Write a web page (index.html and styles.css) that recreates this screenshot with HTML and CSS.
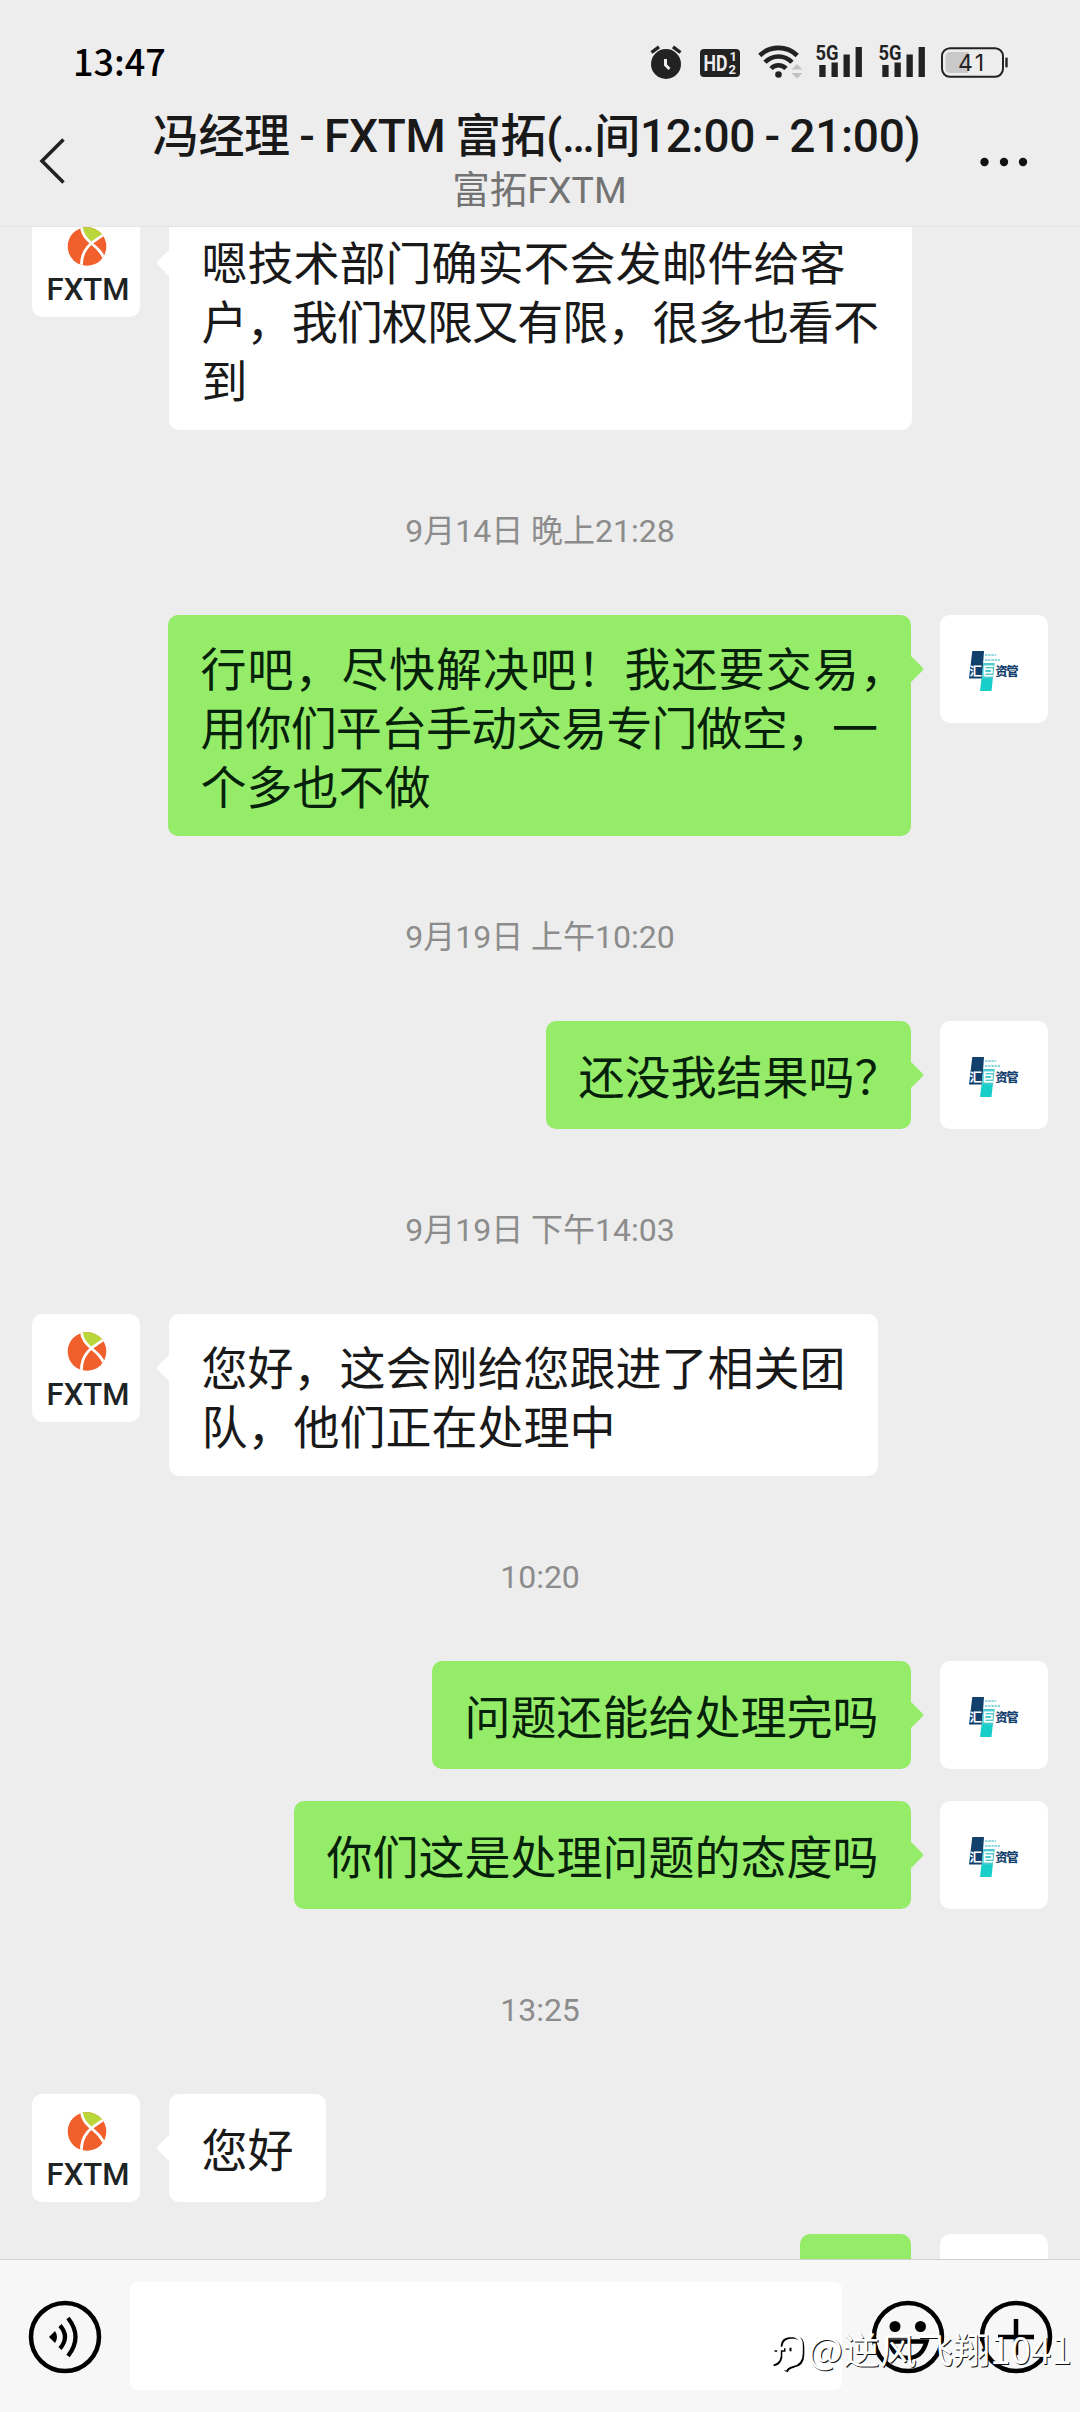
FILE: index.html
```html
<!DOCTYPE html>
<html lang="zh-CN">
<head>
<meta charset="utf-8">
<title>聊天</title>
<link rel="stylesheet" href="styles.css">
</head>
<body>
<svg class="defs" width="0" height="0" aria-hidden="true">
  <defs>
    <clipPath id="ball"><circle cx="55" cy="37.5" r="19.3"/></clipPath>
    <symbol id="fxtm" viewBox="0 0 108 108">
      <g clip-path="url(#ball)">
        <rect x="34" y="16" width="42" height="42" fill="#f15f2c"/>
        <path d="M49 14C50 26 54 31 59.500 36C63 32 68 28 76 24L66 14Z" fill="#b9d63a"/>
        <path d="M49 14C49.500 36 67 32 74 54M76 23C62 32 48 38 49.500 59" fill="none" stroke="#fff" stroke-width="2.800"/>
      </g>
      <text x="14.500" y="90.500" class="fxtm-word" textLength="83" lengthAdjust="spacingAndGlyphs">FXTM</text>
    </symbol>
    <symbol id="huiju" viewBox="0 0 108 108">
      <path d="M32.300 36H44L42 63.500H29Z" fill="#12406c"/>
      <path d="M43.500 48H54.500L51.500 76H40Z" fill="#17cfc8"/>
      <path d="M43.500 48H54.500L53 63.500H42Z" fill="#4cc9cd"/>
      <path d="M45 40H56M45 45H60" stroke="#8fd8dc" stroke-width="2.200" stroke-dasharray="2.400 .8"/>
      <text x="29.500" y="60.800" class="hj-white" textLength="25">汇巨</text>
      <text x="55.500" y="60.800" class="hj-navy" textLength="23">资管</text>
    </symbol>
  </defs>
</svg>
<div class="phone">
  <header class="top">
    <div class="status">
      <span class="clock">13:47</span>
      <div class="status-icons">
        <svg width="32" height="36" viewBox="650 44 32 36"><circle cx="666" cy="64" r="15" fill="#222"/><path d="M651.500 52.500L659 46.800M680.500 52.500L673 46.800" stroke="#222" stroke-width="3.400"/><path d="M665.500 59V65L669.500 69" fill="none" stroke="#ededed" stroke-width="3"/></svg>
        <svg class="gap-18" width="40" height="36" viewBox="700 44 40 36"><rect x="700" y="49" width="40" height="28" rx="4" fill="#222"/><text x="703.500" y="71" class="hd" textLength="24" lengthAdjust="spacingAndGlyphs">HD</text><text x="729.500" y="61" class="hd-n">1</text><text x="728.500" y="74" class="hd-n">2</text></svg>
        <svg class="gap-18" width="45" height="36" viewBox="758 44 45 36"><g fill="none" stroke="#222" stroke-width="4.600"><path d="M759.800 55.500A26.800 26.800 0 0 1 797.200 55.500"/><path d="M765 62.300A18.500 18.500 0 0 1 792 62.300"/><path d="M771 68.500A10.300 10.300 0 0 1 786 68.500"/></g><circle cx="778.500" cy="74.500" r="3.300" fill="#222"/><path d="M791.500 69.500L797 64L802.500 69.500ZM791.500 73L797 78.500L802.500 73Z" fill="#c2c2c2"/></svg>
        <svg class="gap-12" width="48" height="36" viewBox="815 44 48 36"><text x="815.500" y="60" class="net" textLength="23" lengthAdjust="spacingAndGlyphs">5G</text><path d="M819.300 65h6.300v12h-6.300zM831.500 62.500h6.300v14.500h-6.300zM843.500 54.500h6.300v22.500h-6.300zM855.600 47h6.300v30h-6.300z" fill="#222"/></svg>
        <svg class="gap-15" width="48" height="36" viewBox="815 44 48 36"><text x="815.500" y="60" class="net" textLength="23" lengthAdjust="spacingAndGlyphs">5G</text><path d="M819.300 65h6.300v12h-6.300zM831.500 62.500h6.300v14.500h-6.300zM843.500 54.500h6.300v22.500h-6.300zM855.600 47h6.300v30h-6.300z" fill="#222"/></svg>
        <svg class="gap-14" width="69" height="36" viewBox="940 44 69 36"><rect x="942" y="48.200" width="61" height="28.600" rx="8" fill="none" stroke="#222" stroke-width="2"/><path d="M968.500 52H950Q945.500 52 945.500 56.500V68.500Q945.500 73 950 73H968.500Z" fill="#c9c9c9"/><rect x="1005.300" y="57.500" width="2.400" height="10" rx="1" fill="#222"/><text x="971" y="71" text-anchor="middle" class="bat" textLength="26">41</text></svg>
      </div>
    </div>
    <div class="nav">
      <svg class="back" width="30" height="48" viewBox="0 0 30 48"><path d="M27.500 2.500L6 24L27.500 45.500" fill="none" stroke="#222" stroke-width="3.600"/></svg>
      <div class="heading">
        <h1 class="title">冯经理 - FXTM 富拓(…间12:00 - 21:00)</h1>
        <p class="subtitle">富拓FXTM</p>
      </div>
      <svg class="more" width="50" height="10" viewBox="0 0 50 10"><g fill="#111"><circle cx="5.500" cy="5" r="4.200"/><circle cx="25" cy="5" r="4.200"/><circle cx="44" cy="5" r="4.200"/></g></svg>
    </div>
  </header>

  <main class="chat">
    <div class="row in first">
      <svg class="avatar"><use href="#fxtm"/></svg>
      <div class="bubble"><span class="line">嗯技术部门确实不会发邮件给客</span><span class="line tight">户，我们权限又有限，很多也看不</span><span class="line">到</span></div>
    </div>
    <time class="stamp">9月14日 晚上21:28</time>
    <div class="row out">
      <div class="bubble full"><span class="line loose">行吧，尽快解决吧！我还要交易，</span><span class="line tight">用你们平台手动交易专门做空，一</span><span class="line">个多也不做</span></div>
      <svg class="avatar"><use href="#huiju"/></svg>
    </div>
    <time class="stamp">9月19日 上午10:20</time>
    <div class="row out">
      <div class="bubble single"><span class="line">还没我结果吗<span class="half">？</span></span></div>
      <svg class="avatar"><use href="#huiju"/></svg>
    </div>
    <time class="stamp">9月19日 下午14:03</time>
    <div class="row in">
      <svg class="avatar"><use href="#fxtm"/></svg>
      <div class="bubble"><span class="line">您好，这会刚给您跟进了相关团</span><span class="line">队，他们正在处理中</span></div>
    </div>
    <time class="stamp">10:20</time>
    <div class="row out">
      <div class="bubble single"><span class="line">问题还能给处理完吗</span></div>
      <svg class="avatar"><use href="#huiju"/></svg>
    </div>
    <div class="row out">
      <div class="bubble single"><span class="line">你们这是处理问题的态度吗</span></div>
      <svg class="avatar"><use href="#huiju"/></svg>
    </div>
    <time class="stamp">13:25</time>
    <div class="row in">
      <svg class="avatar"><use href="#fxtm"/></svg>
      <div class="bubble single"><span class="line">您好</span></div>
    </div>
    <div class="row out">
      <div class="bubble short"></div>
      <div class="avatar"></div>
    </div>
  </main>

  <footer class="composer">
    <svg width="74" height="74" viewBox="0 0 74 74"><circle cx="37" cy="37" r="34" fill="none" stroke="#000" stroke-width="4.500"/><path d="M21 37L27 31Q31 37 27 43Z" fill="#000"/><path d="M32 25.500Q42 37 32 48.500M40 18Q55 37 40 56" fill="none" stroke="#000" stroke-width="4.200"/></svg>
    <div class="field"></div>
    <svg width="74" height="74" viewBox="0 0 74 74"><circle cx="37" cy="37" r="34" fill="none" stroke="#000" stroke-width="4.500"/><circle cx="24" cy="26.500" r="5.500"/><circle cx="49.500" cy="26.500" r="5.500"/><path d="M18.500 41.500H55.500Q51 58 37 58Q23 58 18.500 41.500Z" fill="none" stroke="#000" stroke-width="4.500"/></svg>
    <svg class="plus" width="74" height="74" viewBox="0 0 74 74"><circle cx="37" cy="37" r="34" fill="none" stroke="#000" stroke-width="4.500"/><path d="M37 19V55M19 37H55" stroke="#000" stroke-width="4.500"/></svg>
  </footer>
  <div class="watermark">
    <svg width="36" height="42" viewBox="0 0 36 42"><g fill="none" stroke-width="3.600"><path d="M3 17.500H9V14Q10 5 19 4.500H24Q31 6 31 14V22Q31 32 22 33.500Q16 35 14.500 39M2 32Q8 31 9 25V17.500H14M18 17H20" stroke="#000" transform="translate(1.500 1.500)"/><path d="M3 17.500H9V14Q10 5 19 4.500H24Q31 6 31 14V22Q31 32 22 33.500Q16 35 14.500 39M2 32Q8 31 9 25V17.500H14" stroke="#fff"/></g></svg>
    <span>@逆风飞翔1041</span>
  </div>
</div>
</body>
</html>
```
FILE: styles.css
```css
* { box-sizing: border-box; }
body {
  margin: 0;
  background: #ededed;
  font-family: Roboto, "Noto Sans CJK SC", sans-serif;
  color: #191919;
}
svg { display: block; flex: none; }
.defs { position: absolute; }
.phone {
  position: relative;
  width: 1080px;
  height: 2412px;
  display: flex;
  flex-direction: column;
  overflow: hidden;
}

/* Status bar and title */
.top {
  flex: none;
  height: 227px;
  border-bottom: 1px solid #e4e4e4;
  background: #ededed;
}
.status {
  display: flex;
  justify-content: space-between;
  height: 107px;
  padding: 44px 71px 0 73px;
}
.clock {
  margin-top: -3px;
  font: 500 36px/38px "Noto Sans CJK SC", sans-serif;
  color: #000;
}
.status-icons { display: flex; }
.status-icons svg { overflow: visible; }
.gap-12 { margin-left: 12px; }
.gap-14 { margin-left: 14px; }
.gap-15 { margin-left: 15px; }
.gap-18 { margin-left: 18px; }
.hd { font: 700 22px Roboto, sans-serif; fill: #ededed; }
.hd-n { font: 700 13px Roboto, sans-serif; fill: #ededed; }
.net { font: 700 21px Roboto, sans-serif; fill: #222; }
.bat { font: 400 23px Inter, sans-serif; fill: #222; }
.nav {
  display: flex;
  align-items: flex-start;
  padding: 0 51px 0 36px;
}
.back { margin-top: 30px; }
.more { margin-top: 50px; }
.heading { flex: 1; padding-left: 28px; text-align: center; }
.title {
  margin: 0;
  font-size: 46px;
  font-weight: 500;
  line-height: 58px;
  letter-spacing: -0.300px;
  word-spacing: -1.700px;
  white-space: nowrap;
}
.subtitle {
  margin: 0;
  padding-left: 6px;
  font-size: 37.500px;
  line-height: 50px;
  color: #737373;
}

/* Avatar artwork */
.fxtm-word { font: 500 32px Roboto, sans-serif; fill: #1d2423; }
.hj-white { font: 700 12.500px "Noto Sans CJK SC", sans-serif; fill: #fff; }
.hj-navy { font: 900 12px "Noto Sans CJK SC", sans-serif; fill: #12406c; }

/* Conversation */
.chat {
  flex: none;
  height: 2032px;
  overflow: hidden;
  display: flex;
  flex-direction: column;
  gap: 32px;
  padding: 0 32px;
}
.row { display: flex; flex: none; align-items: flex-start; gap: 29px; }
.first { margin-top: -18px; }
.out { justify-content: flex-end; }
.avatar {
  width: 108px;
  height: 108px;
  border-radius: 10px;
  background: #fff;
}
.bubble {
  position: relative;
  min-height: 108px;
  padding: 22px 32.500px;
  border-radius: 10px;
  background: #fff;
  font: 400 46px/59px "Noto Sans CJK SC", sans-serif;
  white-space: nowrap;
  display: flex;
  flex-direction: column;
  justify-content: center;
}
.single { padding-top: 22px; padding-bottom: 24px; }
.bubble::before {
  content: "";
  position: absolute;
  top: 44px;
  left: -9px;
  width: 20px;
  height: 20px;
  border-radius: 3px;
  background: inherit;
  transform: rotate(45deg);
}
.out .bubble { background: #95ec69; color: #06210a; }
.out .bubble::before { left: auto; right: -9px; }
.first .bubble, .full { width: 743px; }
.short { width: 111px; }
.line { display: block; }
.tight { letter-spacing: -0.900px; }
.loose { letter-spacing: 1.100px; }
.half { margin-right: -22px; }
.stamp {
  flex: none;
  height: 121px;
  padding-top: 49px;
  text-align: center;
  font-size: 32px;
  line-height: 40px;
  color: #8c8c8c;
}

/* Message input */
.composer {
  flex: none;
  height: 153px;
  display: flex;
  align-items: flex-start;
  padding: 22px 27px 0 28px;
  border-top: 1px solid #d0d0d0;
  background: #f7f7f7;
}
.composer svg { margin-top: 18px; }
.field {
  width: 712px;
  height: 108px;
  margin: 0 29px 0 28px;
  border-radius: 8px;
  background: #fff;
}
.composer .plus { margin-left: 34px; }
.watermark {
  position: absolute;
  left: 770px;
  top: 2323px;
  display: flex;
  align-items: center;
  gap: 2px;
  font: 400 36.800px/50px "Noto Sans CJK SC", sans-serif;
  color: #fff;
  text-shadow: 1px 1px 0 #111;
  white-space: nowrap;
}
.watermark svg { margin-top: 8px; }
```
